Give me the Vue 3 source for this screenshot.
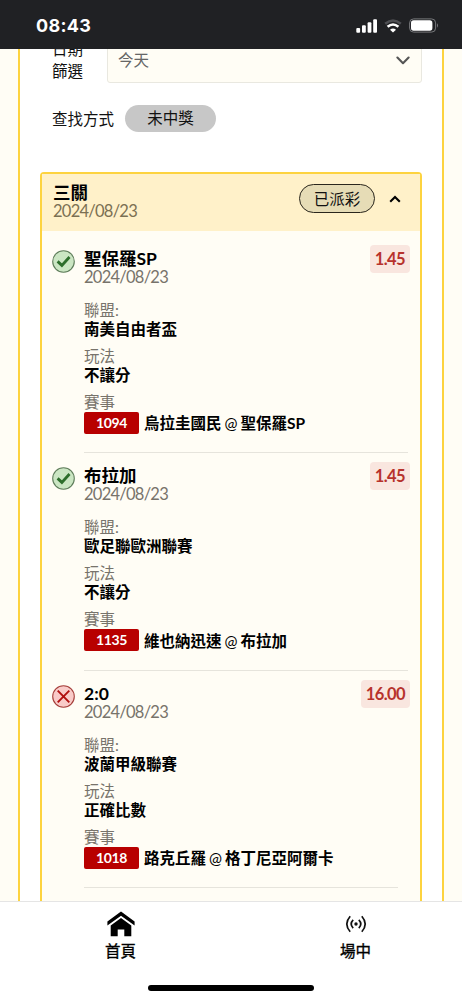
<script setup>
const legs = [
  { won: true, pick: '聖保羅SP', odds: '1.45', league: '南美自由者盃', play: '不讓分', no: '1094', home: '烏拉圭國民', away: '聖保羅SP' },
  { won: true, pick: '布拉加', odds: '1.45', league: '歐足聯歐洲聯賽', play: '不讓分', no: '1135', home: '維也納迅速', away: '布拉加' },
  { won: false, pick: '2:0', odds: '16.00', league: '波蘭甲級聯賽', play: '正確比數', no: '1018', home: '路克丘羅', away: '格丁尼亞阿爾卡' },
]
const date = '2024/08/23'
</script>

<template>
  <div class="screen">
    <header class="status">
      <span class="time">08:43</span>
      <div class="status-icons">
        <svg width="22" height="14" viewBox="0 0 22 14" fill="#fff">
          <rect x="0.3" y="9" width="3.8" height="4.7" rx="1" />
          <rect x="6" y="6.3" width="3.8" height="7.4" rx="1" />
          <rect x="11.6" y="3.3" width="3.8" height="10.4" rx="1" />
          <rect x="17.2" y="0.2" width="3.8" height="13.5" rx="1" />
        </svg>
        <svg class="wifi" width="18" height="14" viewBox="0 0 18 14" fill="none">
          <path d="M1.2 4.8Q9 -1.8 16.8 4.8" stroke="#4e4f53" stroke-width="2.6" />
          <path d="M3.6 7.8Q9 3.2 14.4 7.8" stroke="#fff" stroke-width="2.6" />
          <path d="M6 10.7Q9 8.4 12 10.7L9 13.6Z" fill="#fff" />
        </svg>
        <svg class="battery" width="30" height="15" viewBox="0 0 30 15" fill="none">
          <rect x="0.6" y="0.9" width="26" height="13.2" rx="4" stroke="#77787b" />
          <rect x="2" y="2.3" width="21.4" height="10.4" rx="2.6" fill="#fff" />
          <path d="M28 5.3Q30 7.5 28 9.7Z" fill="#77787b" />
        </svg>
      </div>
    </header>

    <main class="viewport">
      <div class="panel">
        <div class="filter">
          <div class="filter-label">日期<br />篩選</div>
          <div class="select">
            <span>今天</span>
            <svg width="14" height="9" viewBox="0 0 14 9" fill="none">
              <path d="M1.4 1.6L7 7.2L12.6 1.6" stroke="#555" stroke-width="2.1" stroke-linecap="round" stroke-linejoin="round" />
            </svg>
          </div>
        </div>
        <div class="mode">
          <span>查找方式</span>
          <span class="pill">未中獎</span>
        </div>

        <section class="card">
          <div class="card-head">
            <div>
              <div class="title">三關</div>
              <div class="date">{{ date }}</div>
            </div>
            <div class="head-right">
              <span class="paid">已派彩</span>
              <svg width="12" height="8" viewBox="0 0 12 8" fill="none">
                <path d="M1.2 6.8L6 1.9L10.8 6.8" stroke="#000" stroke-width="2.1" />
              </svg>
            </div>
          </div>
          <article v-for="leg in legs" :key="leg.no" class="leg">
            <svg class="mark" width="23" height="23" viewBox="0 0 23 23" fill="none">
              <template v-if="leg.won">
                <circle cx="11.5" cy="11.5" r="10.8" fill="#cbe6c3" stroke="#5f7d5b" stroke-width="1.1" />
                <path d="M5.6 11.4L9.9 15.4L17.5 7" stroke="#2d6e2b" stroke-width="2.8" />
              </template>
              <template v-else>
                <circle cx="11.5" cy="11.5" r="10.8" fill="#f9cbc8" stroke="#a6403c" stroke-width="1.1" />
                <path d="M5.7 5.7L17.3 17.3M17.3 5.7L5.7 17.3" stroke="#b1100f" stroke-width="1.9" />
              </template>
            </svg>
            <div class="details">
              <div class="top">
                <div>
                  <div class="title">{{ leg.pick }}</div>
                  <div class="date">{{ date }}</div>
                </div>
                <span class="odds">{{ leg.odds }}</span>
              </div>
              <dl>
                <dt>聯盟:</dt>
                <dd>{{ leg.league }}</dd>
                <dt>玩法</dt>
                <dd>{{ leg.play }}</dd>
                <dt>賽事</dt>
                <dd class="match">
                  <span class="no">{{ leg.no }}</span>
                  <span class="teams">{{ leg.home }} <i>@</i> {{ leg.away }}</span>
                </dd>
              </dl>
            </div>
          </article>
        </section>
      </div>
    </main>

    <nav class="tabs">
      <div class="tab">
        <svg width="28" height="26" viewBox="0 0 28 26" fill="#000">
          <path d="M14 0.6L27.6 10.6V14.6L14 4.8L0.4 14.6V10.6Z" />
          <path d="M14 7L24.3 14.4V25.2H17.3V18.4H10.7V25.2H3.7V14.4Z" />
        </svg>
        <span>首頁</span>
      </div>
      <div class="tab">
        <svg width="22" height="26" viewBox="0 0 22 26" fill="none" stroke="#111" stroke-width="1.7">
          <circle cx="11" cy="13" r="1.7" fill="#111" stroke="none" />
          <path d="M8.2 8.9Q4.2 13 8.2 17.1M13.8 8.9Q17.8 13 13.8 17.1" />
          <path d="M5.2 5.2Q-1.6 13 5.2 20.8M16.8 5.2Q23.6 13 16.8 20.8" />
        </svg>
        <span>場中</span>
      </div>
      <div class="home-bar"></div>
    </nav>
  </div>
</template>

<style>
body {
  margin: 0;
}
</style>

<style scoped>
* {
  box-sizing: border-box;
}
.screen {
  width: 462px;
  height: 1000px;
  display: flex;
  flex-direction: column;
  overflow: hidden;
  background: #fffdf5;
  color: #111;
  font: 15.5px/22px Lato, "Noto Sans CJK TC", sans-serif;
}
svg {
  display: block;
  flex: none;
}
.status {
  height: 49px;
  flex: none;
  display: flex;
  justify-content: space-between;
  align-items: center;
  padding: 2px 23px 0 36px;
  background: #202124;
  color: #fff;
}
.time {
  font: 700 18px/22px Inter, sans-serif;
  letter-spacing: 0.3px;
}
.status-icons {
  display: flex;
  align-items: center;
}
.wifi {
  margin-left: 6px;
}
.battery {
  margin-left: 7px;
}
.viewport {
  height: 852px;
  flex: none;
  overflow: hidden;
  display: flex;
}
.panel {
  width: 426px;
  height: 900px;
  margin-left: 18px;
  padding: 0 20px;
  border: solid #fdd33f;
  border-width: 0 2px;
  background: #fff;
}
.filter {
  display: flex;
  align-items: center;
  height: 45px;
  margin-top: -11px;
  padding-left: 12px;
}
.filter-label {
  width: 55px;
  padding-bottom: 2px;
  line-height: 22px;
}
.select {
  flex: 1;
  height: 45px;
  display: flex;
  align-items: center;
  justify-content: space-between;
  padding: 0 11px 0 10px;
  border: 1px solid #e9e8e0;
  border-radius: 3px;
  background: #fffdf5;
  color: #666;
}
.select span {
  padding-bottom: 2px;
}
.mode {
  display: flex;
  align-items: center;
  gap: 11px;
  height: 27px;
  margin: 22px 0 40px;
  padding-left: 12px;
}
.pill {
  width: 91px;
  line-height: 27px;
  border-radius: 14px;
  background: #c7c7c7;
  text-align: center;
}
.card {
  height: 760px;
  border: 2px solid #fdd33f;
  border-radius: 4px;
  background: #fffdf5;
}
.card-head {
  display: flex;
  justify-content: space-between;
  height: 57px;
  padding: 9px 19px 0 11px;
  background: #fff1c9;
}
.title {
  font-size: 17.5px;
  line-height: 20px;
  font-weight: 700;
  color: #000;
}
.date {
  font-size: 16.5px;
  line-height: 17px;
  letter-spacing: -0.75px;
  color: #77736b;
}
.card-head .date {
  color: #7b7053;
}
.head-right {
  display: flex;
  align-items: center;
  gap: 14px;
  height: 29px;
  margin-top: 1px;
}
.paid {
  width: 76px;
  height: 29px;
  line-height: 28px;
  border: 1px solid #2a261c;
  border-radius: 15px;
  background: #e6dcb6;
  text-align: center;
}
.leg {
  display: flex;
  height: 217.5px;
  padding: 0 10px 0 10px;
}
.leg:first-of-type {
  margin-top: 4.5px;
}
.mark {
  margin-top: 14px;
}
.details {
  flex: 1;
  margin-left: 9px;
  position: relative;
  height: 217.5px;
}
.details::after {
  content: "";
  position: absolute;
  left: 0;
  right: 2px;
  bottom: 0;
  height: 1px;
  background: #e6e4dc;
}
.leg:last-child .details::after {
  right: 12px;
}
.top {
  display: flex;
  justify-content: space-between;
  height: 63px;
  padding-top: 13px;
}
.odds {
  height: 28px;
  margin-top: -4px;
  padding: 0 5px;
  border-radius: 4px;
  background: #f9e6df;
  color: #b7322c;
  font-weight: 700;
  font-size: 16.5px;
  letter-spacing: -0.6px;
  line-height: 28px;
}
dl {
  margin: 0;
}
dt {
  height: 21px;
  line-height: 22px;
  color: #77736b;
}
dd {
  height: 25px;
  margin: 0;
  line-height: 19px;
  color: #000;
  font-weight: 700;
}
.match {
  display: flex;
  align-items: center;
  gap: 5px;
  height: 22px;
  white-space: nowrap;
}
.teams {
  margin-top: 2px;
  word-spacing: -0.8px;
}
.match i {
  font-style: normal;
  font-weight: 400;
}
.no {
  width: 55px;
  height: 22px;
  border-radius: 2px;
  background: #b80000;
  color: #fff;
  font-size: 14px;
  letter-spacing: -0.4px;
  line-height: 22px;
  text-align: center;
}
.tabs {
  position: relative;
  flex: 1;
  display: flex;
  padding-left: 3px;
  border-top: 1px solid #e5e5e5;
  background: #fff;
}
.tab {
  width: 235px;
  flex: none;
  display: flex;
  flex-direction: column;
  align-items: center;
  padding-top: 9px;
  color: #000;
  -webkit-text-stroke: 0.35px #000;
}
.tab span {
  margin-top: 3px;
}
.home-bar {
  position: absolute;
  left: 148px;
  bottom: 9px;
  width: 166px;
  height: 6px;
  border-radius: 3px;
  background: #000;
}
</style>
